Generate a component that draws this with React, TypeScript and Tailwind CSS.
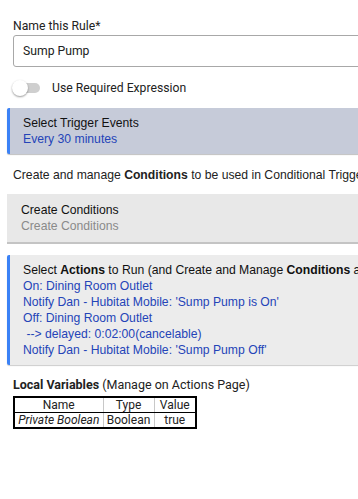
import React from "react";

const blue = "text-[#2444b8]";
const sf = "font-['Liberation_Sans',Arial,sans-serif]";

export default function App() {
  return (
    <div className="w-[358px] h-[499px] overflow-hidden bg-white text-[#222] font-['Roboto',sans-serif]">
      <div className="w-[440px] pt-[18px]">
        <div className="pl-[13px] text-[12.2px] leading-[16px]">Name this Rule*</div>
        <div className="ml-[13px] mt-[1px] h-[32px] border border-[#a8a8a8] rounded-l-[3px] flex items-center pl-[9px] text-[12.2px]">
          Sump Pump
        </div>

        <div className="flex items-center mt-[13px] pl-[12px] h-[16px]">
          <div className="relative w-[30px] h-[14px] flex items-center">
            <div className="ml-[4px] w-[24px] h-[10px] rounded-full bg-[#cfcfcf]" />
            <div className="absolute left-0 top-[-1px] w-[16px] h-[16px] rounded-full bg-white shadow-[0_1px_2px_rgba(0,0,0,0.4)]" />
          </div>
          <span className="ml-[10px] text-[12.2px]">Use Required Expression</span>
        </div>

        <div className={`mt-[12px] ml-[7px] bg-[#c6cbd9] border-l-[3px] border-[#3b82f6] rounded-l-[2px] shadow-[0_1px_1px_rgba(0,0,0,0.25)] pl-[13px] pt-[7px] pb-[7px] ${sf} text-[12.2px] leading-[16px]`}>
          <div className="text-[#111]">Select Trigger Events</div>
          <div className={blue}>Every 30 minutes</div>
        </div>

        <div className={`mt-[13px] pl-[13px] text-[12.2px] leading-[16px] ${sf} whitespace-nowrap`}>
          Create and manage <b className="font-bold">Conditions</b> to be used in Conditional Triggers
        </div>

        <div className={`mt-[11px] ml-[7px] bg-[#e8e8e8] border-b-[2px] border-[#c4c4c4] pl-[14px] pt-[8px] pb-[8px] ${sf} text-[12.2px] leading-[16px]`}>
          <div className="text-[#111]">Create Conditions</div>
          <div className="text-[#8a8a8a]">Create Conditions</div>
        </div>

        <div className={`mt-[11px] ml-[7px] bg-[#ececec] border-l-[3px] border-[#3b82f6] rounded-l-[2px] shadow-[0_1px_1px_rgba(0,0,0,0.2)] pl-[13px] pt-[7px] pb-[7px] ${sf} text-[12.2px] leading-[16px] whitespace-nowrap`}>
          <div className="text-[#111]">
            Select <b className="font-bold">Actions</b> to Run (and Create and Manage <b className="font-bold">Conditions</b> as needed)
          </div>
          <div className={blue}>On: Dining Room Outlet</div>
          <div className={blue}>Notify Dan - Hubitat Mobile: 'Sump Pump is On'</div>
          <div className={blue}>Off: Dining Room Outlet</div>
          <div className={blue}>&nbsp;--&gt; delayed: 0:02:00(cancelable)</div>
          <div className={blue}>Notify Dan - Hubitat Mobile: 'Sump Pump Off'</div>
        </div>

        <div className="mt-[12px] pl-[13px] text-[12.5px] leading-[16px]">
          <b className="font-bold">Local Variables</b> (Manage on Actions Page)
        </div>
        <table className="ml-[13px] mt-[3px] border-2 border-black border-collapse text-[12px] leading-[14px]">
          <tbody>
            <tr>
              <td className="w-[89px] text-center border border-[#c8c8c8] border-b-black h-[15px]">Name</td>
              <td className="w-[51px] text-center border border-[#c8c8c8] border-b-black">Type</td>
              <td className="w-[42px] text-center border border-[#c8c8c8] border-b-black">Value</td>
            </tr>
            <tr>
              <td className="text-center italic border border-[#c8c8c8] h-[15px]">Private Boolean</td>
              <td className="text-center border border-[#c8c8c8]">Boolean</td>
              <td className="text-center border border-[#c8c8c8]">true</td>
            </tr>
          </tbody>
        </table>
      </div>
    </div>
  );
}
